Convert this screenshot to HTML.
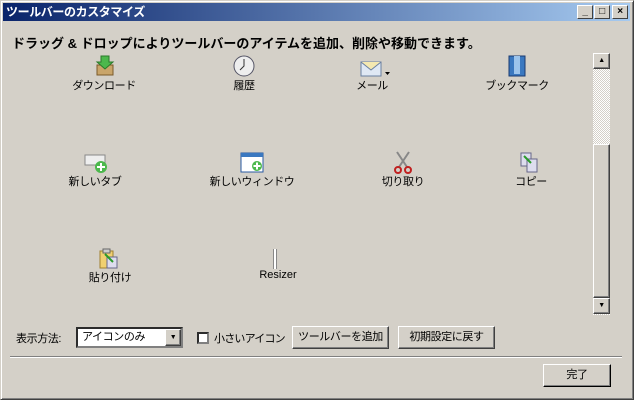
<!DOCTYPE html><html><head><meta charset="utf-8"><style>
*{margin:0;padding:0;box-sizing:border-box}
body{width:634px;height:400px;background:#d4d0c8;font-family:"Liberation Sans","Noto Sans CJK JP",sans-serif;font-size:11px;color:#000;position:relative;overflow:hidden;letter-spacing:-0.4px}
.a{position:absolute}
#win{left:0;top:0;width:634px;height:400px;border:1px solid;border-color:#d4d0c8 #404040 #404040 #d4d0c8;box-shadow:inset 1px 1px #fff,inset -1px -1px #808080}
#title{left:3px;top:3px;width:627px;height:18px;background:linear-gradient(90deg,#0a246a,#a6caf0);color:#fff;font-weight:bold;font-size:12px;line-height:18px;padding-left:3px}
.tb{top:5px;width:16px;height:14px;background:#d4d0c8;border:1px solid;border-color:#fff #404040 #404040 #fff;font-size:10px;line-height:11px;text-align:center;font-weight:bold}
.lbl{transform:translateX(-50%);white-space:nowrap;font-size:11px}
.btn{background:#d4d0c8;border:1px solid;border-color:#fff #404040 #404040 #fff;box-shadow:inset -1px -1px #808080;text-align:center;font-size:11px}
</style></head><body>
<div id="win" class="a"></div>
<div id="title" class="a">ツールバーのカスタマイズ</div>
<div class="a tb" style="left:577px">_</div>
<div class="a tb" style="left:594px">□</div>
<div class="a tb" style="left:612px">×</div>
<div class="a" style="left:12px;top:33px;font-size:13px;font-weight:bold;letter-spacing:0">ドラッグ &amp; ドロップによりツールバーのアイテムを追加、削除や移動できます。</div>

<svg class="a" style="left:94px;top:55px" width="22" height="22"><rect x="3" y="10" width="16" height="10" fill="#c9a56a" stroke="#7a5a2a"/><path d="M7 1h8v6h4l-8 7-8-7h4z" fill="#4cb84c" stroke="#2a7a2a"/></svg>
<svg class="a" style="left:233px;top:55px" width="22" height="22"><circle cx="11" cy="11" r="10" fill="#eee" stroke="#556"/><path d="M11 4v7l-4 4" stroke="#333" fill="none"/></svg>
<svg class="a" style="left:360px;top:58px" width="30" height="20"><rect x="1" y="4" width="20" height="14" fill="#dfe8f4" stroke="#6a7fa0"/><path d="M1 4l10 8 10-8" fill="#f4e8b0" stroke="#6a7fa0"/><path d="M25 14h5l-2.5 3z" fill="#000"/></svg>
<svg class="a" style="left:506px;top:55px" width="22" height="22"><rect x="3" y="1" width="16" height="20" fill="#3a78c0" stroke="#1a3a70"/><rect x="8" y="1" width="6" height="18" fill="#9cc4ec"/></svg>
<div class="a lbl" style="left:104px;top:77px">ダウンロード</div>
<div class="a lbl" style="left:244px;top:77px">履歴</div>
<div class="a lbl" style="left:372px;top:77px">メール</div>
<div class="a lbl" style="left:517px;top:77px">ブックマーク</div>

<svg class="a" style="left:84px;top:152px" width="26" height="22"><rect x="1" y="3" width="20" height="10" fill="#eee" stroke="#888"/><circle cx="17" cy="15" r="6" fill="#4cb84c"/><path d="M17 11v8M13 15h8" stroke="#fff" stroke-width="2"/></svg>
<svg class="a" style="left:240px;top:152px" width="26" height="22"><rect x="1" y="1" width="22" height="19" fill="#fff" stroke="#2a5aa0"/><rect x="1" y="1" width="22" height="4" fill="#3a78c0"/><circle cx="17" cy="14" r="5" fill="#4cb84c"/><path d="M17 10.5v7M13.5 14h7" stroke="#fff" stroke-width="2"/></svg>
<svg class="a" style="left:393px;top:151px" width="20" height="24"><path d="M4 1l10 15M16 1L6 16" stroke="#888" stroke-width="2"/><circle cx="5" cy="19" r="3" fill="none" stroke="#c02020" stroke-width="2"/><circle cx="15" cy="19" r="3" fill="none" stroke="#c02020" stroke-width="2"/></svg>
<svg class="a" style="left:520px;top:152px" width="22" height="22"><rect x="1" y="1" width="10" height="13" fill="#dde" stroke="#668"/><rect x="7" y="7" width="10" height="13" fill="#dde" stroke="#668"/><path d="M4 4l7 7" stroke="#2a9a2a" stroke-width="2"/></svg>
<div class="a lbl" style="left:95px;top:173px">新しいタブ</div>
<div class="a lbl" style="left:252px;top:173px">新しいウィンドウ</div>
<div class="a lbl" style="left:403px;top:173px">切り取り</div>
<div class="a lbl" style="left:531px;top:173px">コピー</div>

<svg class="a" style="left:99px;top:248px" width="22" height="22"><rect x="1" y="3" width="13" height="17" fill="#f0d070" stroke="#a08030"/><rect x="4" y="1" width="7" height="4" fill="#ccc" stroke="#666"/><rect x="8" y="9" width="10" height="11" fill="#dde" stroke="#668"/><path d="M6 6l8 8" stroke="#2a9a2a" stroke-width="2"/></svg>
<div class="a" style="left:273px;top:249px;width:4px;height:20px;border-left:1px solid #888;border-right:1px solid #888;background:#fff"></div>
<div class="a lbl" style="left:110px;top:269px">貼り付け</div>
<div class="a lbl" style="left:278px;top:269px;letter-spacing:0">Resizer</div>

<div class="a" style="left:593px;top:53px;width:17px;height:262px;background-color:#eceae6;background-image:repeating-conic-gradient(#fff 0 25%,#d4d0c8 0 50%);background-size:2px 2px"></div>
<div class="a btn" style="left:593px;top:53px;width:17px;height:16px;font-size:7px;line-height:14px">▲</div>
<div class="a btn" style="left:593px;top:144px;width:17px;height:154px"></div>
<div class="a btn" style="left:593px;top:298px;width:17px;height:16px;font-size:7px;line-height:14px">▼</div>

<div class="a" style="left:16px;top:330px">表示方法:</div>
<div class="a" style="left:76px;top:327px;width:107px;height:21px;background:#fff;border:2px inset #808080;padding-left:4px;line-height:17px">アイコンのみ</div>
<div class="a btn" style="left:165px;top:329px;width:16px;height:17px;font-size:7px;line-height:15px">▼</div>
<div class="a" style="left:197px;top:332px;width:12px;height:12px;background:#fff;border:2px inset #808080"></div>
<div class="a" style="left:214px;top:330px;letter-spacing:-0.8px">小さいアイコン</div>
<div class="a btn" style="left:292px;top:326px;width:97px;height:23px;line-height:21px">ツールバーを追加</div>
<div class="a btn" style="left:398px;top:326px;width:97px;height:23px;line-height:21px">初期設定に戻す</div>
<div class="a" style="left:10px;top:356px;width:612px;height:2px;border-top:1px solid #808080;border-bottom:1px solid #fff"></div>
<div class="a btn" style="left:543px;top:364px;width:68px;height:23px;line-height:21px;border-color:#fff #000 #000 #fff">完了</div>
</body></html>
